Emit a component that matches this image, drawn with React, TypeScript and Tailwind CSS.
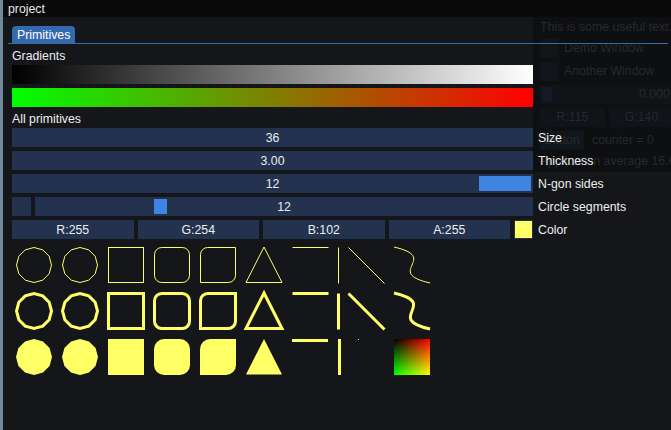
import React from "react";

const YELLOW = "#ffff66";
const SZ = 36;

const ngonPoints = (cx: number, cy: number, r: number, n: number) => {
  const pts: string[] = [];
  for (let i = 0; i < n; i++) {
    const a = (Math.PI * 2 * i) / n;
    pts.push(`${(cx + r * Math.cos(a)).toFixed(2)},${(cy + r * Math.sin(a)).toFixed(2)}`);
  }
  return pts.join(" ");
};

// rect with top-left and bottom-right corners rounded
const tlbr = (x0: number, y0: number, x1: number, y1: number, r: number) =>
  `M${x0},${y0 + r} A${r},${r} 0 0 1 ${x0 + r},${y0} L${x1},${y0} L${x1},${y1 - r} A${r},${r} 0 0 1 ${x1 - r},${y1} L${x0},${y1} Z`;

const OutlineRow = ({ y, th }: { y: number; th: number }) => (
  <g fill="none" stroke={YELLOW} strokeWidth={th}>
    <polygon points={ngonPoints(4 + 18, y + 18, 17.5, 12)} />
    <polygon points={ngonPoints(50 + 18, y + 18, 17.5, 12)} />
    <rect x={96.5} y={y + 0.5} width={SZ - 1} height={SZ - 1} />
    <rect x={142.5} y={y + 0.5} width={SZ - 1} height={SZ - 1} rx={7.2} />
    <path d={tlbr(188.5, y + 0.5, 188 + SZ - 0.5, y + SZ - 0.5, 7.2)} />
    <polygon points={`${234 + 18},${y} ${234 + SZ},${y + SZ - 0.5} ${234},${y + SZ - 0.5}`} />
    <line x1={280.5} y1={y + 0.5} x2={316.5} y2={y + 0.5} />
    <line x1={326.5} y1={y + 0.5} x2={326.5} y2={y + 36.5} />
    <line x1={336.5} y1={y + 0.5} x2={372.5} y2={y + 36.5} />
    <path d={`M382,${y} C${382 + 46.8},${y + 10.8} ${382 - 10.8},${y + 25.2} ${418},${y + 36}`} />
  </g>
);

const Shapes = () => {
  const y = 96;
  return (
    <svg width="440" height="140" className="block">
      <defs>
        <linearGradient id="gx" x1="0" y1="0" x2="1" y2="0">
          <stop offset="0" stopColor="#000000" />
          <stop offset="1" stopColor="#ff0000" />
        </linearGradient>
        <linearGradient id="gy" x1="0" y1="0" x2="0" y2="1">
          <stop offset="0" stopColor="#000000" />
          <stop offset="1" stopColor="#00ff00" />
        </linearGradient>
      </defs>
      <OutlineRow y={4} th={1} />
      <OutlineRow y={50} th={3} />
      <g fill={YELLOW}>
        <polygon points={ngonPoints(22, y + 18, 18, 12)} />
        <polygon points={ngonPoints(68, y + 18, 18, 12)} />
        <rect x={96} y={y} width={SZ} height={SZ} />
        <rect x={142} y={y} width={SZ} height={SZ} rx={10} />
        <path d={tlbr(188, y, 188 + SZ, y + SZ, 10)} />
        <polygon points={`${252},${y} ${270},${y + SZ - 0.5} ${234},${y + SZ - 0.5}`} />
        <rect x={280} y={y} width={SZ} height={3} />
        <rect x={326} y={y} width={3} height={SZ} />
        <rect x={346} y={y} width={1} height={1} />
      </g>
      <g style={{ isolation: "isolate" }}>
        <rect x={382} y={y} width={SZ} height={SZ} fill="url(#gx)" />
        <rect x={382} y={y} width={SZ} height={SZ} fill="url(#gy)" className="mix-blend-screen" />
      </g>
    </svg>
  );
};

const Slider = ({ value, grab }: { value: string; grab?: string }) => (
  <div className="relative h-[19px] w-[521px] bg-[#22324f] flex items-center justify-center">
    {grab === "right" && <div className="absolute right-[2px] top-[2px] h-[15px] w-[52px] bg-[#3d85e0]" />}
    <span className="relative translate-y-px">{value}</span>
  </div>
);

const Row = ({ children, label }: { children: React.ReactNode; label: string }) => (
  <div className="flex items-center gap-[5px] h-[19px] whitespace-nowrap">
    {children}
    <span className="translate-y-px">{label}</span>
  </div>
);

const Cell = ({ text }: { text: string }) => (
  <div className="flex-1 bg-[#22324f] flex items-center justify-center">
    <span className="translate-y-px">{text}</span>
  </div>
);

const App = () => {
  return (
    <div className="relative flex w-[671px] h-[430px] overflow-hidden bg-[#151619] font-['Liberation_Sans',Arial,sans-serif] text-[12.3px] text-[#eeeeee]">
      <div className="w-[3px] shrink-0 bg-[#6e8a9b]" />
      <div className="flex-1 flex flex-col">
        <div className="h-[17px] shrink-0 bg-[#0a0a0a] pl-[5px] pt-px leading-[17px] rounded-tl-[3px] text-[#e6e6e6]">
          project
        </div>
        <div className="relative flex-1">
          {/* other window, behind */}
          <div className="absolute left-[530px] top-0 w-[141px] h-[155px] bg-[#0e0f11] pt-[3px] pl-[7px] flex flex-col gap-[4px] text-[#27292d] whitespace-nowrap overflow-hidden">
            <div className="h-[15px] leading-[15px]">This is some useful text.</div>
            <div className="flex items-center gap-[5px] h-[19px]">
              <div className="w-[19px] h-[19px] bg-[#111419]" />
              <span>Demo Window</span>
            </div>
            <div className="flex items-center gap-[5px] h-[19px]">
              <div className="w-[19px] h-[19px] bg-[#111419]" />
              <span>Another Window</span>
            </div>
            <div className="relative h-[19px] w-[200px] bg-[#101318]">
              <div className="absolute left-[2px] top-[2px] w-[10px] h-[15px] bg-[#131a25]" />
              <span className="absolute left-[99px] top-0 leading-[19px]">0.000</span>
            </div>
            <div className="flex gap-[4px] h-[19px]">
              <div className="w-[67px] bg-[#101318] flex items-center justify-center">R:115</div>
              <div className="w-[67px] bg-[#101318] flex items-center justify-center">G:140</div>
            </div>
            <div className="flex items-center gap-[8px] h-[19px]">
              <div className="h-[19px] w-[44px] bg-[#11161d] flex items-center justify-center">Button</div>
              <span>counter = 0</span>
            </div>
            <div className="h-[15px] leading-[15px]">Application average 16.667 ms/frame (60.0 FPS)</div>
          </div>

          <div className="relative flex flex-col">
            <div className="flex ml-[5px] mr-[3px] mt-[9px] border-b border-[#3a6aa6]">
              <div className="ml-[4px] h-[17px] px-[5px] pt-px bg-[#3369ad] rounded-t-[4px] leading-[17px] text-white">
                Primitives
              </div>
            </div>
            <div className="pl-[9px] flex flex-col">
              <div className="mt-[4px] h-[15px] leading-[15px] translate-y-px">Gradients</div>
              <div className="mt-[2px] h-[19px] w-[521px] bg-[linear-gradient(to_right,#000000,#ffffff)]" />
              <div className="mt-[4px] h-[19px] w-[521px] bg-[linear-gradient(to_right,#00ff00,#ff0000)]" />
              <div className="mt-[4px] h-[15px] leading-[15px] translate-y-px">All primitives</div>
              <div className="mt-[2px] flex flex-col gap-[4px]">
                <Row label="Size">
                  <Slider value="36" />
                </Row>
                <Row label="Thickness">
                  <Slider value="3.00" />
                </Row>
                <Row label="N-gon sides">
                  <Slider value="12" grab="right" />
                </Row>
                <Row label="Circle segments">
                  <div className="flex gap-[4px] w-[521px] h-[19px]">
                    <div className="w-[19px] h-[19px] bg-[#22324f]" />
                    <div className="relative flex-1 bg-[#22324f] flex items-center justify-center">
                      <div className="absolute left-[119px] top-[2px] h-[15px] w-[13px] bg-[#3d85e0]" />
                      <span className="relative translate-y-px">12</span>
                    </div>
                  </div>
                </Row>
                <Row label="Color">
                  <div className="flex gap-[4px] w-[521px] h-[19px]">
                    <Cell text="R:255" />
                    <Cell text="G:254" />
                    <Cell text="B:102" />
                    <Cell text="A:255" />
                    <div className="w-[19px] h-[19px] bg-[#ffff66] border border-[#22324f]" />
                  </div>
                </Row>
              </div>
              <div className="mt-[4px]">
                <Shapes />
              </div>
            </div>
          </div>
        </div>
      </div>
    </div>
  );
};

export default App;
